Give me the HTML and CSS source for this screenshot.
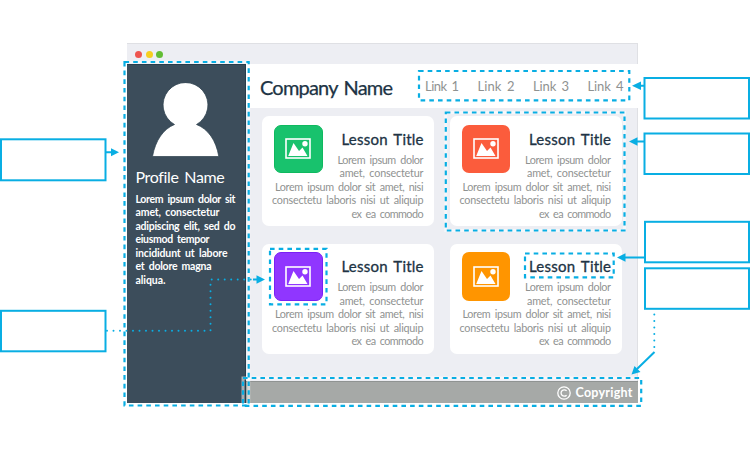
FILE: index.html
```
<!DOCTYPE html>
<html lang="en">
<head>
<meta charset="utf-8">
<title>Company Name</title>
<link rel="stylesheet" href="styles.css">
</head>
<body>
<svg class="symbols" aria-hidden="true">
  <symbol id="picture" viewBox="0 0 26 21">
    <rect x="1" y="1" width="24" height="19" fill="none" stroke="#fff" stroke-width="1.6"/>
    <path d="M3.200 18 8.500 5l5.500 8 3.500-3.500 5 8.500Z" fill="#fff"/>
    <circle cx="20" cy="5.800" r="2.700" fill="#fff"/>
  </symbol>
</svg>
<div class="window">
  <div class="titlebar"><i class="dot red"></i><i class="dot yellow"></i><i class="dot green"></i></div>
  <div class="body">
    <aside class="sidebar">
      <svg class="avatar" viewBox="0 0 68 74"><path d="M22.500 41.500A22.400 22.400 0 1 1 44.500 41.500C56 46 64 57 66.800 73.500H.5C3.500 57 11.500 46 22.500 41.500Z" fill="#fff" stroke="#293d4b" stroke-width=".7"/></svg>
      <h2><span data-w="89">Profile Name</span></h2>
      <p class="bio"><span data-w="100">Lorem ipsum dolor sit</span><span data-w="84">amet, consectetur</span><span data-w="100">adipiscing elit, sed do</span><span data-w="74">eiusmod tempor</span><span data-w="92">incididunt ut labore</span><span data-w="76">et dolore magna</span><span data-w="30">aliqua.</span></p>
    </aside>
    <main>
      <header>
        <h1><span data-w="133">Company Name</span></h1>
        <nav><span data-w="34">Link 1</span><span data-w="37">Link 2</span><span data-w="36">Link 3</span><span data-w="36">Link 4</span></nav>
      </header>
      <section class="cards">
        <article class="card">
          <div class="tile green-tile"><svg><use href="#picture"/></svg></div>
          <h3><span data-w="82">Lesson Title</span></h3>
          <p><span data-w="86">Lorem ipsum dolor</span><span data-w="84">amet, consectetur</span><span data-w="148.500">Lorem ipsum dolor sit amet, nisi</span><span data-w="151.500">consectetu laboris nisi ut aliquip</span><span data-w="72">ex ea commodo</span></p>
        </article>
        <article class="card">
          <div class="tile red-tile"><svg><use href="#picture"/></svg></div>
          <h3><span data-w="82">Lesson Title</span></h3>
          <p><span data-w="86">Lorem ipsum dolor</span><span data-w="84">amet, consectetur</span><span data-w="148.500">Lorem ipsum dolor sit amet, nisi</span><span data-w="151.500">consectetu laboris nisi ut aliquip</span><span data-w="72">ex ea commodo</span></p>
        </article>
        <article class="card">
          <div class="tile purple-tile"><svg><use href="#picture"/></svg></div>
          <h3><span data-w="82">Lesson Title</span></h3>
          <p><span data-w="86">Lorem ipsum dolor</span><span data-w="84">amet, consectetur</span><span data-w="148.500">Lorem ipsum dolor sit amet, nisi</span><span data-w="151.500">consectetu laboris nisi ut aliquip</span><span data-w="72">ex ea commodo</span></p>
        </article>
        <article class="card">
          <div class="tile orange-tile"><svg><use href="#picture"/></svg></div>
          <h3><span data-w="82">Lesson Title</span></h3>
          <p><span data-w="86">Lorem ipsum dolor</span><span data-w="84">amet, consectetur</span><span data-w="148.500">Lorem ipsum dolor sit amet, nisi</span><span data-w="151.500">consectetu laboris nisi ut aliquip</span><span data-w="72">ex ea commodo</span></p>
        </article>
      </section>
      <footer><svg class="copy" viewBox="0 0 14 14"><circle cx="7" cy="7" r="6.200"/><path d="M9.600 4.800A3.200 3.200 0 1 0 9.600 9.200"/></svg><span data-w="57">Copyright</span></footer>
    </main>
  </div>
</div>
<svg class="annotations" viewBox="0 0 750 450">
  <g class="halo">
    <path d="M124.500 62H248.700V405.500H124.500Z"/><path d="M243 378H641.200V405.800H243Z"/>
    <path d="M445.800 112.500H624.500V230.500H445.800Z"/>
  </g>
  <g class="dash">
    <path d="M124.500 62H248.700V405.500H124.500Z"/>
    <path d="M419 71H629.300V100.300H419Z"/>
    <path d="M445.800 112.500H624.500V230.500H445.800Z"/>
    <path d="M270 248.800H326.500V304.300H270Z"/>
    <path d="M525 253.500H613.700V277.400H525Z"/>
    <path d="M243 378H641.200V405.800H243Z"/>
  </g>
  <g class="callout">
    <rect x="1" y="139.300" width="104.500" height="41"/>
    <rect x="1" y="310.800" width="104.500" height="40.500"/>
    <rect x="644.500" y="78" width="104.500" height="40.500"/>
    <rect x="644.500" y="133.500" width="104.500" height="40.500"/>
    <rect x="645" y="221.800" width="104" height="40.500"/>
    <rect x="645" y="268.300" width="104" height="40.500"/>
    <path d="M106 152.300H112M644 85.800H638M644 141.500H636M644 257.500H624M654.500 352 637 369M253 279.500H259"/>
  </g>
  <g class="dots"><path d="M107 330.800H210.500V279.500H253"/><path d="M654.300 314.500V350"/></g>
  <g class="heads">
    <path d="M119 152.300 111 148.300V156.300ZM632 85.800 641 81.500V90ZM629 141.500 637.500 137.200V145.800ZM617 257.500 625.500 253.200V261.800ZM631.500 374.500 634.500 366 640.500 372ZM265 279.500 256.500 275.200V283.800Z"/>
  </g>
</svg>
<script src="fit.js"></script>
</body>
</html>
```
FILE: styles.css
```
* { box-sizing: border-box; margin: 0; padding: 0; }
body { width: 750px; height: 450px; overflow: hidden; background: #fff; font-family: Lato, "Open Sans", sans-serif; padding: 43px 0 0 127px; position: relative; }
.symbols { display: none; }
span { white-space: nowrap; word-spacing: 2px; }
.window { width: 511px; height: 360px; display: flex; flex-direction: column; background: #edeef3; border-top: 1px solid #dfe0e4; border-right: 1px solid #dfe0e4; }
.titlebar { height: 20px; display: flex; gap: 3.700px; align-items: center; padding: 1px 0 0 8px; }
.dot { width: 7px; height: 7px; border-radius: 50%; }
.red { background: #ee554f; }
.yellow { background: #f6cf20; }
.green { background: #62bd34; }
.body { flex: 1; display: flex; margin-right: -1px; }
.sidebar { width: 119px; padding: 17.500px 0 0 8.500px; background: #3c4d5b; border-right: 1px solid #293d4b; border-top: 1px solid #293d4b; color: #fff; }
.avatar { display: block; width: 68px; height: 74px; margin-left: 16.500px; }
h1, h2, h3 { font-weight: 400; }
h2 { font-size: 16px; line-height: 20px; margin-top: 10px; }
.bio { margin-top: 6px; font-size: 10.500px; line-height: 13.500px; font-weight: 700; }
.bio span { display: block; width: max-content; }
main { flex: 1; display: flex; flex-direction: column; }
header { height: 43.500px; display: flex; justify-content: space-between; align-items: center; padding: 2px 14.500px 0 14px; background: #fff; }
h1 { font-size: 20px; line-height: 24px; color: #203344; -webkit-text-stroke: .25px #203344; }
nav { display: flex; gap: 18.500px; font-size: 13px; font-weight: 400; color: #8f9291; padding-bottom: 2px; }
.cards { flex: 1; display: grid; grid-template-columns: 172px 172px; grid-template-rows: 110px 110px; gap: 17.500px 15.500px; padding: 8.500px 0 0 16px; }
.card { background: #fff; border-radius: 7px; padding: 8.500px 10.500px 0 12px; text-align: right; }
.tile { float: left; width: 48.500px; height: 48.500px; border-radius: 7px; display: grid; place-items: center; }
.tile svg { width: 26px; height: 21px; }
.green-tile { background: #18c26d; border: 1px solid #0eb95f; }
.red-tile { background: #fb5c3c; }
.purple-tile { background: #9036ff; border: 1px solid #7b1ff5; }
.orange-tile { background: #ff9500; }
h3 { padding-top: 4px; font-size: 15px; line-height: 20px; color: #203344; -webkit-text-stroke: .3px #203344; }
.card p { margin-top: 4px; font-size: 10.800px; line-height: 13.600px; color: #8f9291; font-weight: 400; display: flex; flex-direction: column; align-items: flex-end; }
.card p span { display: block; }
footer { height: 22px; background: #a6a9a7; border-top: 1px solid #8f9392; display: flex; align-items: center; justify-content: flex-end; gap: 4px; padding-right: 5.500px; color: #fff; font-size: 12.500px; font-weight: 700; }
.copy { width: 14px; height: 14px; fill: none; stroke: #fff; stroke-width: 1.300; }
.annotations { position: absolute; left: 0; top: 0; width: 750px; height: 450px; fill: none; stroke: #09aee3; }
.halo { stroke: #fff; stroke-width: 3; stroke-opacity: .55; }
.dash { stroke-width: 2.200; stroke-dasharray: 4.600 4.100; }
.callout { stroke-width: 2; }
.dots { stroke-width: 2; stroke-dasharray: 0 6.500; stroke-linecap: round; }
.heads { fill: #09aee3; stroke: none; }
```
FILE: fit.js
```
// Tracks each text line so that it fills its measure.
document.querySelectorAll('[data-w]').forEach(function (el) {
  el.style.display = 'inline-block';
  var spacing = (Number(el.dataset.w) - el.getBoundingClientRect().width) / (el.textContent.length - 1);
  el.style.display = '';
  el.style.letterSpacing = spacing + 'px';
  el.style.marginRight = -spacing + 'px';
});
```
